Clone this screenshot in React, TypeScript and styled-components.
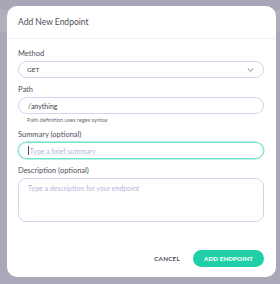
import styled, { createGlobalStyle } from 'styled-components';

const GlobalStyle = createGlobalStyle`
    html, body {
        margin: 0;
        padding: 0;
        background: #a9a8b9;
        font-family: 'Lato', 'Open Sans', sans-serif;
    }
    * {
        box-sizing: border-box;
    }
`;

const Overlay = styled.div`
    width: 280px;
    height: 284px;
    padding: 6px 4px 7px 7px;
    background: linear-gradient(to bottom, #a8a7b8 0px, #a8a7b8 10px, #b0afbe 10px, #b0afbe 32px, #a9a8b9 32px);
`;

const Modal = styled.div`
    width: 269px;
    height: 271px;
    background: #ffffff;
    border-radius: 10px;
    display: flex;
    flex-direction: column;
    overflow: hidden;
`;

const Header = styled.div`
    height: 33px;
    padding: 0 11px;
    display: flex;
    align-items: center;
    border-bottom: 1px solid #f1f0f6;
    font-size: 8.5px;
    color: #4f4e5c;
`;

const Body = styled.div`
    flex: 1;
    padding: 10px 12px 10px 11px;
    display: flex;
    flex-direction: column;
`;

const Field = styled.div`
    display: flex;
    flex-direction: column;
    margin-bottom: 7px;
`;

const Label = styled.label`
    font-size: 7.5px;
    color: #4f4e5c;
    margin-bottom: 2px;
    line-height: 10px;
`;

const Select = styled.div`
    height: 17px;
    border: 1px solid #d7d2f0;
    border-radius: 9px;
    display: flex;
    align-items: center;
    justify-content: space-between;
    padding: 0 9px 0 8px;
    font-size: 6.5px;
    color: #3f3e4c;
`;

const Input = styled.div<{ $focused?: boolean }>`
    height: 17px;
    border: 1px solid ${p => (p.$focused ? '#72e2cb' : '#d7d2f0')};
    box-shadow: ${p => (p.$focused ? '0 0 0 0.5px #72e2cb' : 'none')};
    border-radius: 9px;
    display: flex;
    align-items: center;
    padding: 0 9px;
    font-size: 7px;
    color: #3f3e4c;
`;

const Placeholder = styled.span`
    color: #b9b3d8;
    font-size: 7px;
`;

const Caret = styled.span`
    display: inline-block;
    width: 0.8px;
    height: 9px;
    background: #4f4e5c;
    margin-right: 1px;
`;

const Help = styled.div`
    font-size: 5.6px;
    line-height: 7px;
    color: #6d6c78;
    padding-left: 9px;
    margin-top: 2px;
    margin-bottom: 0;
`;

const TextArea = styled.div`
    height: 44px;
    border: 1px solid #d7d2f0;
    border-radius: 8px;
    padding: 5px 9px;
    font-size: 7px;
`;

const Footer = styled.div`
    display: flex;
    justify-content: flex-end;
    align-items: center;
    gap: 13px;
    margin-top: auto;
`;

const CancelButton = styled.button`
    background: none;
    border: none;
    padding: 0;
    font-family: inherit;
    font-size: 6.2px;
    font-weight: 700;
    letter-spacing: 0.3px;
    color: #4a4956;
`;

const PrimaryButton = styled.button`
    height: 17px;
    width: 71px;
    border: none;
    border-radius: 9px;
    background: #1fcfa7;
    color: #ffffff;
    font-family: inherit;
    font-size: 6.2px;
    font-weight: 900;
    letter-spacing: 0.1px;
`;

const Chevron = () => (
    <svg width="7" height="4" viewBox="0 0 7 4" fill="none">
        <path d="M1 0.8l2.5 2.4 2.5-2.4" stroke="#6b6a80" strokeWidth="0.9" strokeLinecap="round" strokeLinejoin="round" />
    </svg>
);

const App = () => {
    return (
        <>
            <GlobalStyle />
            <Overlay>
                <Modal>
                    <Header>Add New Endpoint</Header>
                    <Body>
                        <Field>
                            <Label>Method</Label>
                            <Select>
                                <span>GET</span>
                                <Chevron />
                            </Select>
                        </Field>
                        <Field>
                            <Label>Path</Label>
                            <Input>/anything</Input>
                            <Help>Path definition uses regex syntax</Help>
                        </Field>
                        <Field>
                            <Label>Summary (optional)</Label>
                            <Input $focused>
                                <Caret />
                                <Placeholder>Type a brief summary</Placeholder>
                            </Input>
                        </Field>
                        <Field>
                            <Label>Description (optional)</Label>
                            <TextArea>
                                <Placeholder>Type a description for your endpoint</Placeholder>
                            </TextArea>
                        </Field>
                        <Footer>
                            <CancelButton>CANCEL</CancelButton>
                            <PrimaryButton>ADD ENDPOINT</PrimaryButton>
                        </Footer>
                    </Body>
                </Modal>
            </Overlay>
        </>
    );
};

export default App;
